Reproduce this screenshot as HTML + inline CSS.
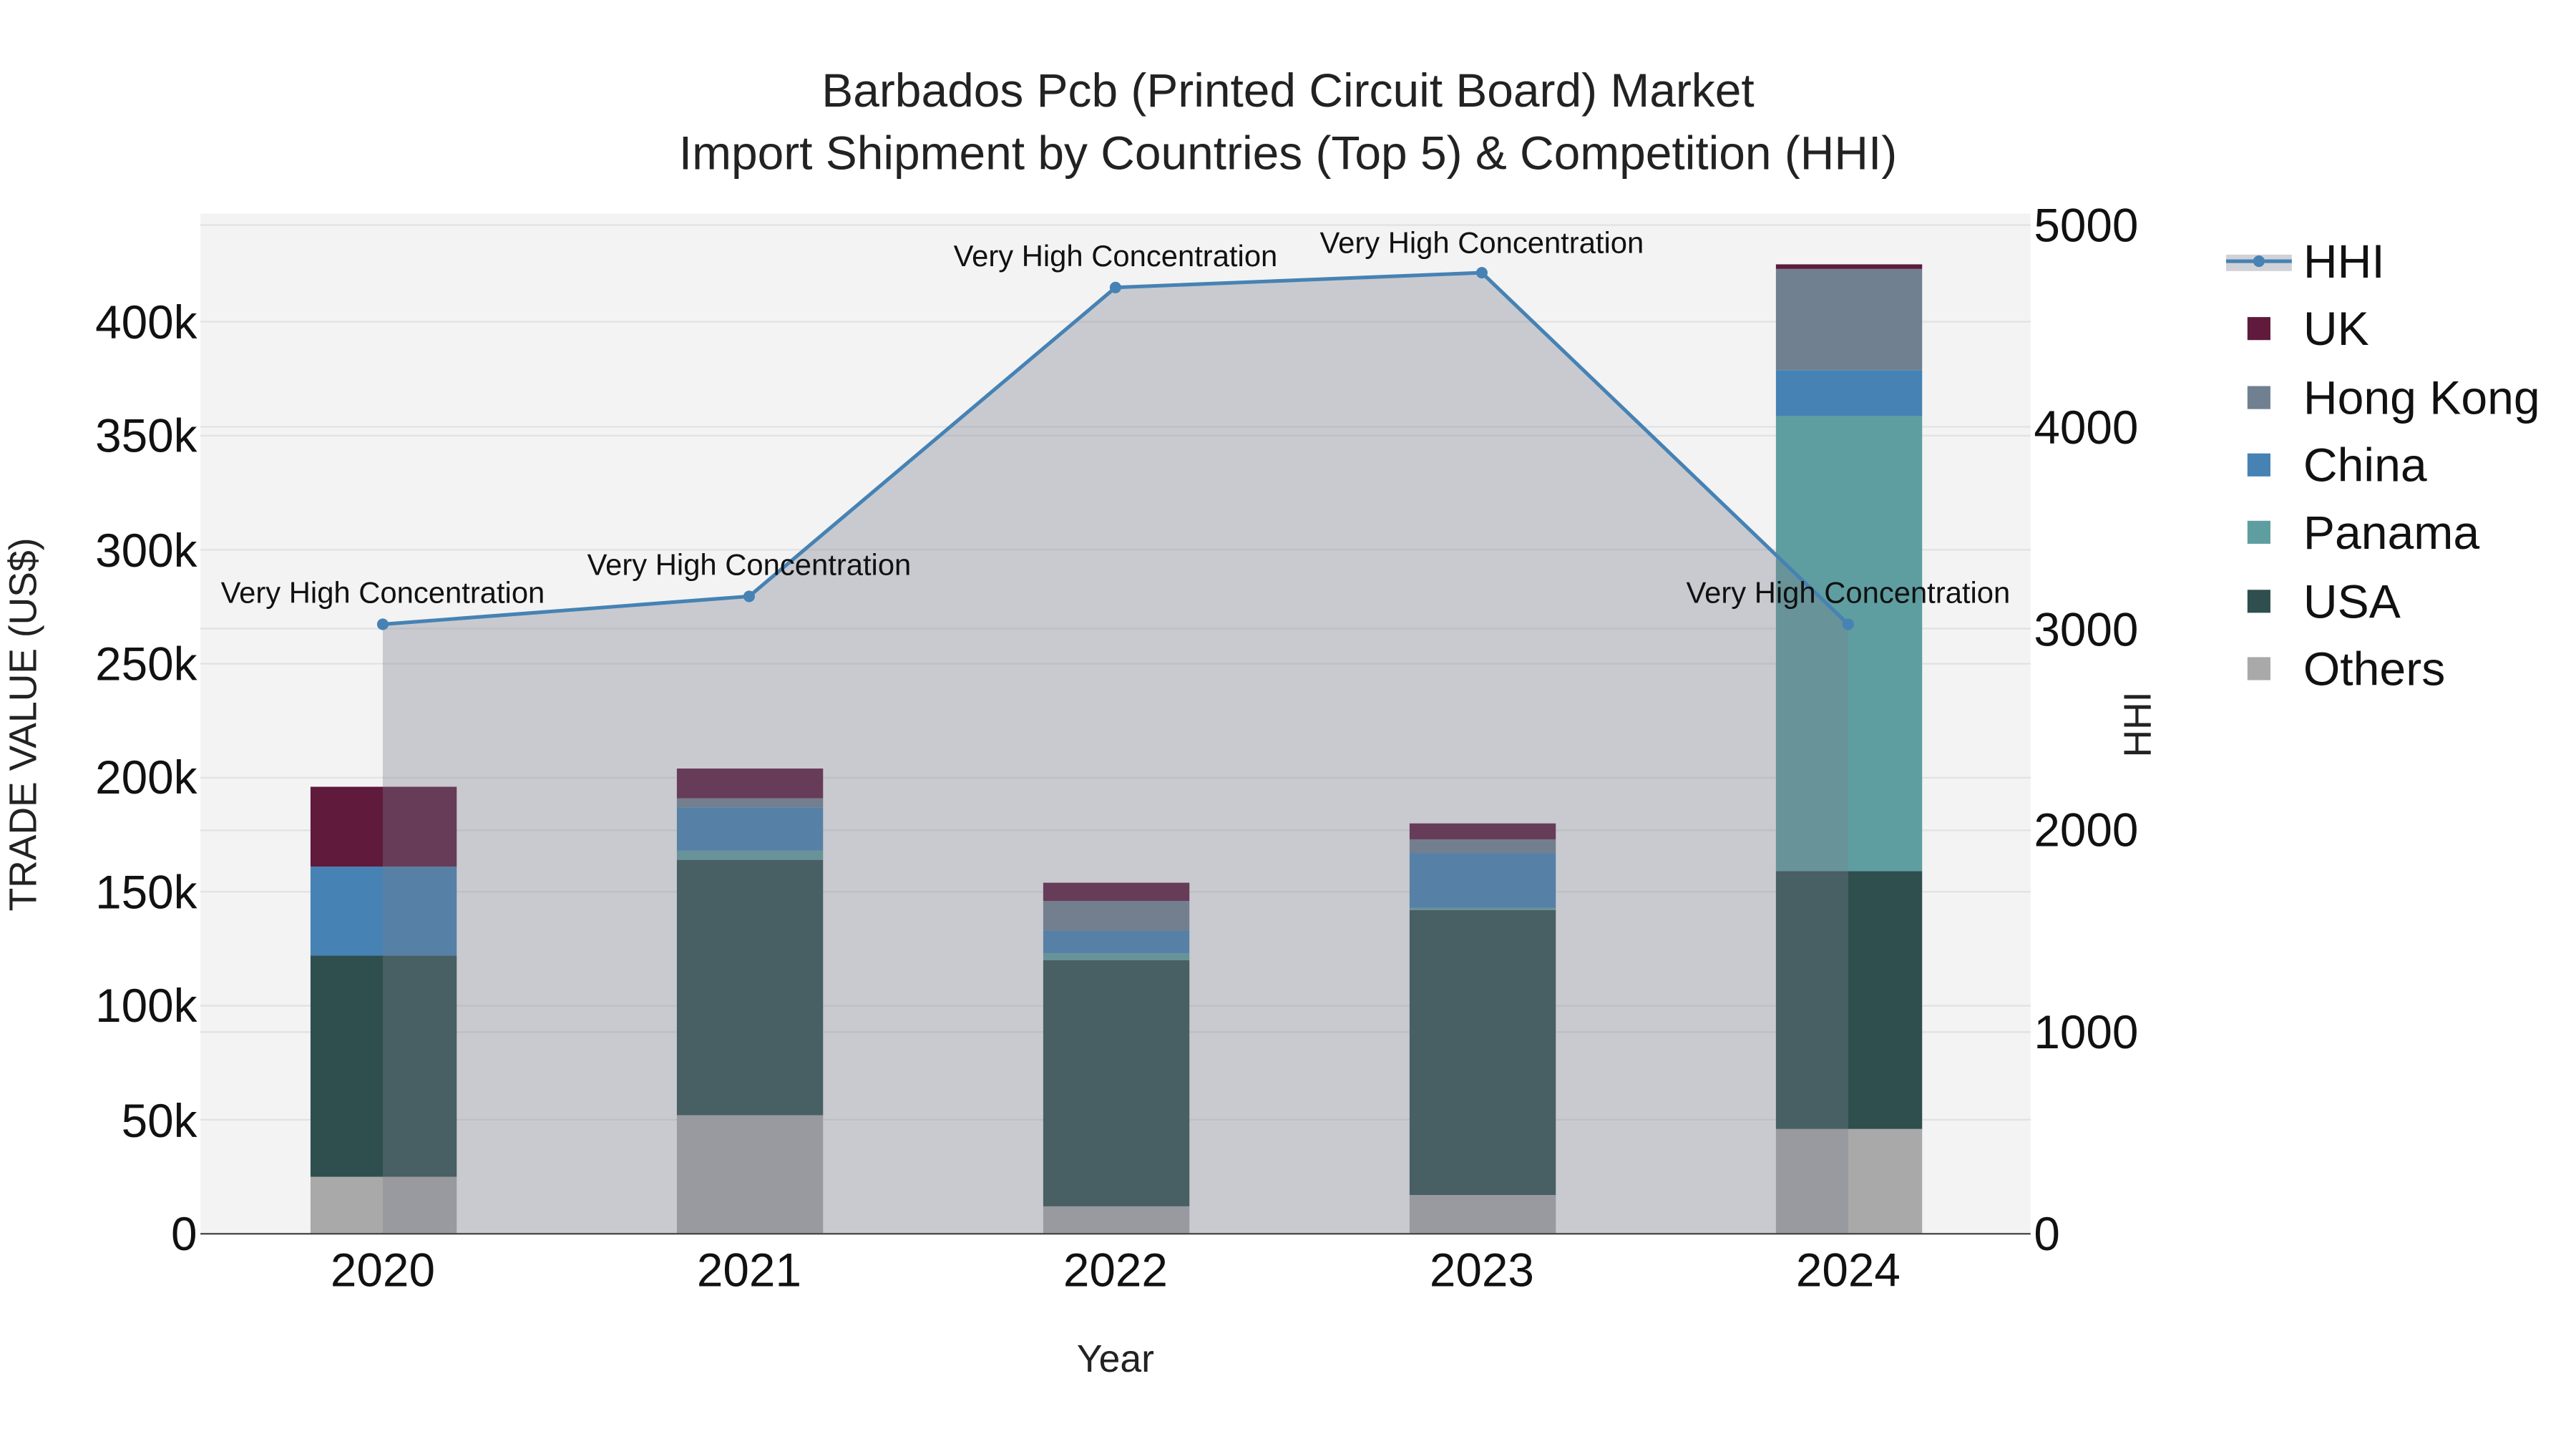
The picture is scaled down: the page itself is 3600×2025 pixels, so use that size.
<!DOCTYPE html>
<html><head><meta charset="utf-8"><style>html,body{margin:0;padding:0;background:#fff}svg{display:block}</style></head>
<body>
<svg width="3600" height="2025" viewBox="0 0 1568 882" preserveAspectRatio="xMinYMin meet" xmlns="http://www.w3.org/2000/svg" font-family="Liberation Sans, Arial, sans-serif">
<rect width="1568" height="882" fill="#fff"/>
<rect x="122" y="130" width="1114" height="621" fill="#f3f3f3"/>
<g stroke="#e2e2e2" stroke-width="1">
<line x1="122" x2="1236" y1="681.6" y2="681.6"/><line x1="122" x2="1236" y1="612.2" y2="612.2"/>
<line x1="122" x2="1236" y1="542.8" y2="542.8"/><line x1="122" x2="1236" y1="473.4" y2="473.4"/>
<line x1="122" x2="1236" y1="404" y2="404"/><line x1="122" x2="1236" y1="334.6" y2="334.6"/>
<line x1="122" x2="1236" y1="265.2" y2="265.2"/><line x1="122" x2="1236" y1="195.8" y2="195.8"/>
<line x1="122" x2="1236" y1="628.2" y2="628.2"/><line x1="122" x2="1236" y1="505.4" y2="505.4"/>
<line x1="122" x2="1236" y1="382.6" y2="382.6"/><line x1="122" x2="1236" y1="259.8" y2="259.8"/>
<line x1="122" x2="1236" y1="137" y2="137"/>
</g>
<g>
<rect x="189" y="716.3" width="89" height="34.7" fill="#a9a9a9"/>
<rect x="189" y="581.7" width="89" height="134.6" fill="#2f4f4f"/>
<rect x="189" y="527.5" width="89" height="54.2" fill="#4682b4"/>
<rect x="189" y="478.9" width="89" height="48.6" fill="#5f1a3c"/>
<rect x="412" y="678.8" width="89" height="72.2" fill="#a9a9a9"/>
<rect x="412" y="523.4" width="89" height="155.4" fill="#2f4f4f"/>
<rect x="412" y="517.8" width="89" height="5.6" fill="#5f9ea0"/>
<rect x="412" y="491.4" width="89" height="26.4" fill="#4682b4"/>
<rect x="412" y="485.9" width="89" height="5.5" fill="#708090"/>
<rect x="412" y="467.8" width="89" height="18.1" fill="#5f1a3c"/>
<rect x="635" y="734.3" width="89" height="16.7" fill="#a9a9a9"/>
<rect x="635" y="584.4" width="89" height="149.9" fill="#2f4f4f"/>
<rect x="635" y="580.3" width="89" height="4.1" fill="#5f9ea0"/>
<rect x="635" y="566.4" width="89" height="13.9" fill="#4682b4"/>
<rect x="635" y="548.4" width="89" height="18" fill="#708090"/>
<rect x="635" y="537.3" width="89" height="11.1" fill="#5f1a3c"/>
<rect x="858" y="727.4" width="89" height="23.6" fill="#a9a9a9"/>
<rect x="858" y="553.9" width="89" height="173.5" fill="#2f4f4f"/>
<rect x="858" y="552.5" width="89" height="1.4" fill="#5f9ea0"/>
<rect x="858" y="519.2" width="89" height="33.3" fill="#4682b4"/>
<rect x="858" y="510.9" width="89" height="8.3" fill="#708090"/>
<rect x="858" y="501.2" width="89" height="9.7" fill="#5f1a3c"/>
<rect x="1081" y="687.2" width="89" height="63.8" fill="#a9a9a9"/>
<rect x="1081" y="530.3" width="89" height="156.9" fill="#2f4f4f"/>
<rect x="1081" y="253.3" width="89" height="277" fill="#5f9ea0"/>
<rect x="1081" y="225.3" width="89" height="28" fill="#4682b4"/>
<rect x="1081" y="163.7" width="89" height="61.6" fill="#708090"/>
<rect x="1081" y="160.9" width="89" height="2.8" fill="#5f1a3c"/>
</g>
<polygon points="233,751 233,380 456,363 679,175 902,166 1125,380 1125,751" fill="rgb(119,125,140)" fill-opacity="0.35"/>
<polyline points="233,380 456,363 679,175 902,166 1125,380" fill="none" stroke="#4682b4" stroke-width="2.2"/>
<g fill="#4682b4"><circle cx="233" cy="380" r="3.5"/><circle cx="456" cy="363" r="3.5"/><circle cx="679" cy="175" r="3.5"/><circle cx="902" cy="166" r="3.5"/><circle cx="1125" cy="380" r="3.5"/></g>
<line x1="122" x2="1236" y1="751" y2="751" stroke="#444" stroke-width="1"/>
<g font-size="18.2" fill="#111" text-anchor="middle">
<text x="233" y="367">Very High Concentration</text>
<text x="456" y="350">Very High Concentration</text>
<text x="679" y="162">Very High Concentration</text>
<text x="902" y="154">Very High Concentration</text>
<text x="1125" y="367">Very High Concentration</text>
</g>
<g font-size="28.7" fill="#222" text-anchor="middle">
<text x="784" y="65">Barbados Pcb (Printed Circuit Board) Market</text>
<text x="784" y="103">Import Shipment by Countries (Top 5) &amp; Competition (HHI)</text>
</g>
<g font-size="28.6" fill="#111" text-anchor="end">
<text x="120" y="761">0</text><text x="120" y="692">50k</text><text x="120" y="622">100k</text>
<text x="120" y="553">150k</text><text x="120" y="483">200k</text><text x="120" y="414">250k</text>
<text x="120" y="345">300k</text><text x="120" y="275">350k</text><text x="120" y="206">400k</text>
</g>
<g font-size="28.6" fill="#111">
<text x="1238" y="761">0</text><text x="1238" y="638">1000</text><text x="1238" y="515">2000</text>
<text x="1238" y="393">3000</text><text x="1238" y="270">4000</text><text x="1238" y="147">5000</text>
</g>
<g font-size="28.6" fill="#111" text-anchor="middle">
<text x="233" y="783">2020</text><text x="456" y="783">2021</text><text x="679" y="783">2022</text><text x="902" y="783">2023</text><text x="1125" y="783">2024</text>
</g>
<text x="679" y="835" font-size="23.3" fill="#222" text-anchor="middle">Year</text>
<text transform="translate(22,441) rotate(-90)" font-size="23.3" fill="#222" text-anchor="middle">TRADE VALUE (US$)</text>
<text transform="translate(1309,441) rotate(-90)" font-size="23.3" fill="#222" text-anchor="middle">HHI</text>
<rect x="1355" y="155" width="40" height="10" fill="rgb(119,125,140)" fill-opacity="0.35"/>
<line x1="1355" x2="1395" y1="159" y2="159" stroke="#4682b4" stroke-width="2.2"/>
<circle cx="1375" cy="159" r="3.5" fill="#4682b4"/>
<rect x="1368" y="193" width="14" height="14" fill="#5f1a3c"/>
<rect x="1368" y="235" width="14" height="14" fill="#708090"/>
<rect x="1368" y="276" width="14" height="14" fill="#4682b4"/>
<rect x="1368" y="317" width="14" height="14" fill="#5f9ea0"/>
<rect x="1368" y="359" width="14" height="14" fill="#2f4f4f"/>
<rect x="1368" y="400" width="14" height="14" fill="#a9a9a9"/>
<g font-size="28.8" fill="#111">
<text x="1402" y="169">HHI</text><text x="1402" y="210">UK</text><text x="1402" y="252">Hong Kong</text>
<text x="1402" y="293">China</text><text x="1402" y="334">Panama</text><text x="1402" y="376">USA</text><text x="1402" y="417">Others</text>
</g>
</svg>
</body></html>
